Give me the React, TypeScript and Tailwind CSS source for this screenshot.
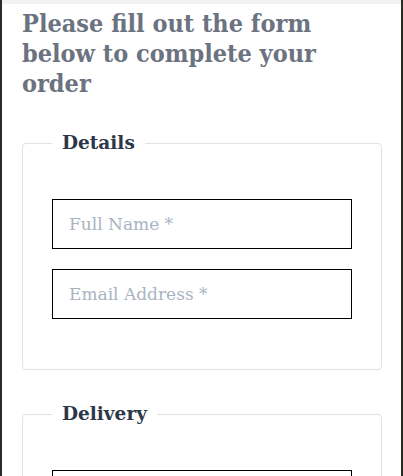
export default function App() {
  const serif = { fontFamily: '"DejaVu Serif", Georgia, serif' };
  const inputCls =
    "h-[50px] w-[300px] border border-black px-[16px] text-[17px] text-[#2d3748] outline-none placeholder:text-[#a9b4c2]";
  return (
    <div className="min-h-[476px] w-[403px] border-l-2 border-r-2 border-[#2b2d24] bg-white" style={serif}>
      <div className="h-[4px] bg-[#f1f3f3]" />
      <div className="pl-[20px] pr-[19px]">
        <h1
          className="pt-[5px] text-[25px] font-bold leading-[30px] text-[#6b7280]"
          style={{ fontFamily: '"DejaVu Serif Condensed", "DejaVu Serif", Georgia, serif' }}
        >
          Please fill out the form below to complete your order
        </h1>

        <fieldset className="mt-[30px] rounded-[4px] border border-[#e2e2e2] px-[29px] pb-[50px] pt-[42px]">
          <legend className="px-[10px] text-[18.5px] font-bold leading-[28px] text-[#2d3748]">Details</legend>
          <div className="flex flex-col gap-[20px]">
            <input placeholder="Full Name *" className={inputCls} style={serif} />
            <input placeholder="Email Address *" className={inputCls} style={serif} />
          </div>
        </fieldset>

        <fieldset className="mt-[30px] rounded-[4px] border border-[#e2e2e2] px-[29px] pb-[50px] pt-[42px]">
          <legend className="px-[10px] text-[18.5px] font-bold leading-[28px] text-[#2d3748]">Delivery</legend>
          <div className="flex flex-col gap-[20px]">
            <input placeholder="Street Address *" className={inputCls} style={serif} />
          </div>
        </fieldset>
      </div>
    </div>
  );
}
